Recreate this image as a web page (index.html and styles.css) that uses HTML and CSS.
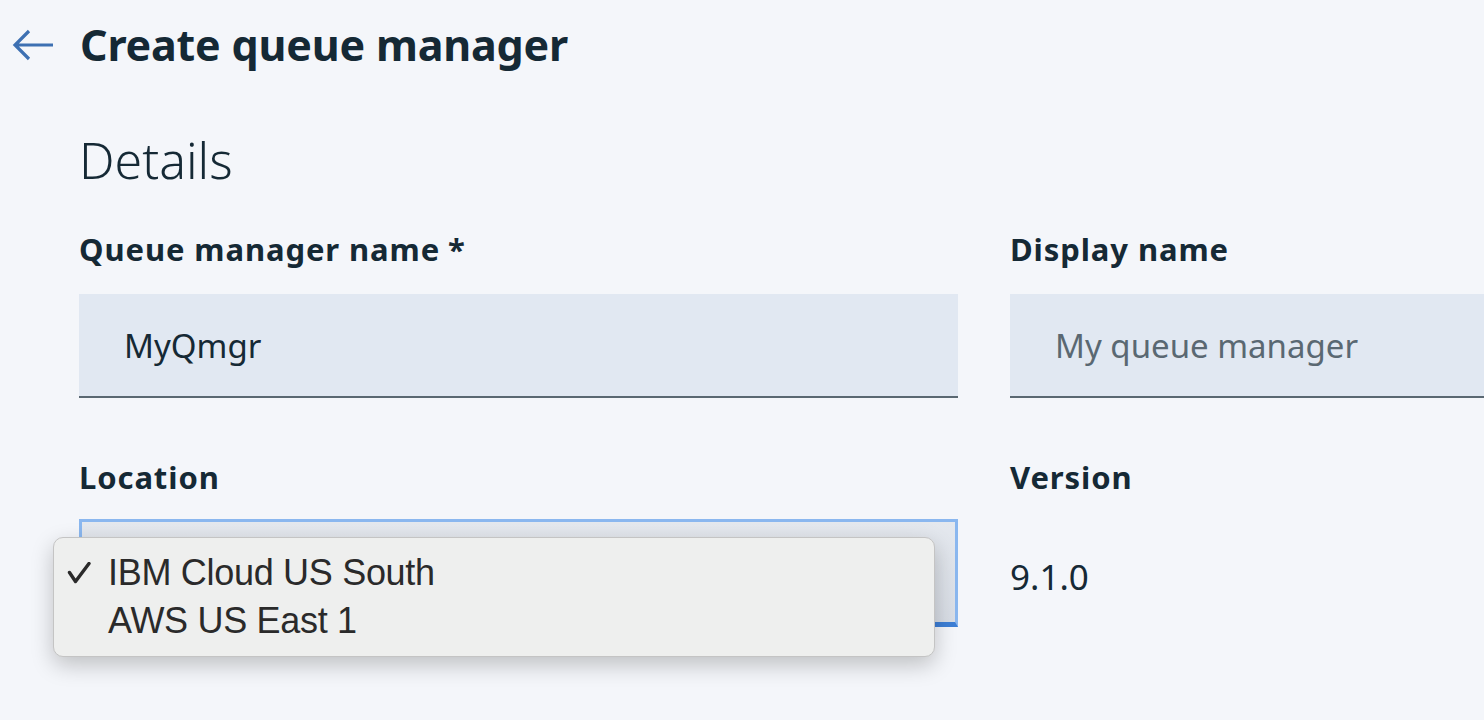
FILE: index.html
```html
<!DOCTYPE html>
<html lang="en">
<head>
<meta charset="utf-8">
<title>Create queue manager</title>
<link rel="stylesheet" href="styles.css">
</head>
<body>
<header class="page-header">
  <svg class="back" width="44" height="34" viewBox="0 0 44 34" aria-hidden="true">
    <path d="M42 17 H4 M18 3 L4 17 L18 31" fill="none" stroke="#3d70b2" stroke-width="3.2"/>
  </svg>
  <h1 class="title">Create queue manager</h1>
</header>
<main class="content">
  <h2 class="section">Details</h2>
  <div class="form-grid">
    <div class="field">
      <label class="label">Queue manager name<span class="req">*</span></label>
      <div class="input">MyQmgr</div>
    </div>
    <div class="field">
      <label class="label">Display name</label>
      <div class="input placeholder">My queue manager</div>
    </div>
    <div class="field">
      <label class="label">Location</label>
      <div class="select">
        <div class="menu">
          <div class="opt"><span class="check"><svg width="24" height="22" viewBox="0 0 24 22" aria-hidden="true"><path d="M2.5 10.5 L8.5 19.5 L22 1.5" fill="none" stroke="#2a2a2a" stroke-width="3.4" stroke-linejoin="round" stroke-linecap="round"/></svg></span>IBM Cloud US South</div>
          <div class="opt"><span class="check"></span>AWS US East 1</div>
        </div>
      </div>
    </div>
    <div class="field">
      <label class="label">Version</label>
      <div class="value">9.1.0</div>
    </div>
  </div>
</main>
</body>
</html>
```
FILE: styles.css
```css
html, body {
  margin: 0;
  padding: 0;
  background: #f4f6fa;
  color: #152935;
  font-family: "Noto Sans", "Open Sans", sans-serif;
}
body {
  min-height: 720px;
}
.page-header {
  display: flex;
  align-items: center;
  height: 88px;
  padding-left: 11px;
  gap: 25px;
}
.back { display: block; margin-top: 2px; }
.title {
  margin: 0;
  font-size: 43px;
  font-weight: 700;
  letter-spacing: -0.2px;
  color: #152935;
}
.content {
  padding-left: 79px;
  padding-bottom: 60px;
}
.section {
  margin: 32px 0 0 0;
  font-size: 50px;
  font-weight: 300;
  line-height: 80px;
  height: 80px;
  color: #152935;
}
.form-grid {
  display: grid;
  grid-template-columns: 879px 1fr;
  column-gap: 52px;
  row-gap: 59px;
  margin-top: 29px;
}
.field {
  display: flex;
  flex-direction: column;
  min-width: 0;
}
.label {
  font-size: 31px;
  font-weight: 700;
  letter-spacing: 0.9px;
  line-height: 40px;
  height: 40px;
  margin-bottom: 25px;
  white-space: nowrap;
}
.req { margin-left: 8px; }
.input {
  height: 104px;
  box-sizing: border-box;
  background: #e1e8f2;
  border-bottom: 2px solid #5a6872;
  padding-left: 45px;
  display: flex;
  align-items: center;
  font-size: 33px;
  color: #152935;
}
.input.placeholder { color: #5a6872; }
.select {
  position: relative;
  height: 108px;
  box-sizing: border-box;
  background: linear-gradient(#e4e8ee, #d8dde5);
  border: 3px solid #8ab7ef;
  border-bottom: 5px solid #3d7fd6;
  margin-top: -3px;
}
.menu {
  position: absolute;
  left: -29px;
  top: 15px;
  width: 882px;
  height: 120px;
  box-sizing: border-box;
  background: #eeefee;
  border: 1px solid #c4c4c4;
  border-radius: 10px;
  box-shadow: 0 8px 22px rgba(0,0,0,0.22);
  padding-top: 11px;
  font-family: "Liberation Sans", Arial, sans-serif;
  font-size: 36px;
  color: #2a2a2a;
}
.opt {
  display: flex;
  align-items: center;
  height: 48px;
  letter-spacing: -0.3px;
}
.check {
  display: flex;
  align-items: center;
  width: 54px;
  padding-left: 13px;
  box-sizing: border-box;
}
.check svg { display: block; }
.value {
  font-size: 35px;
  line-height: 40px;
  margin-top: 35px;
  color: #152935;
}
```
